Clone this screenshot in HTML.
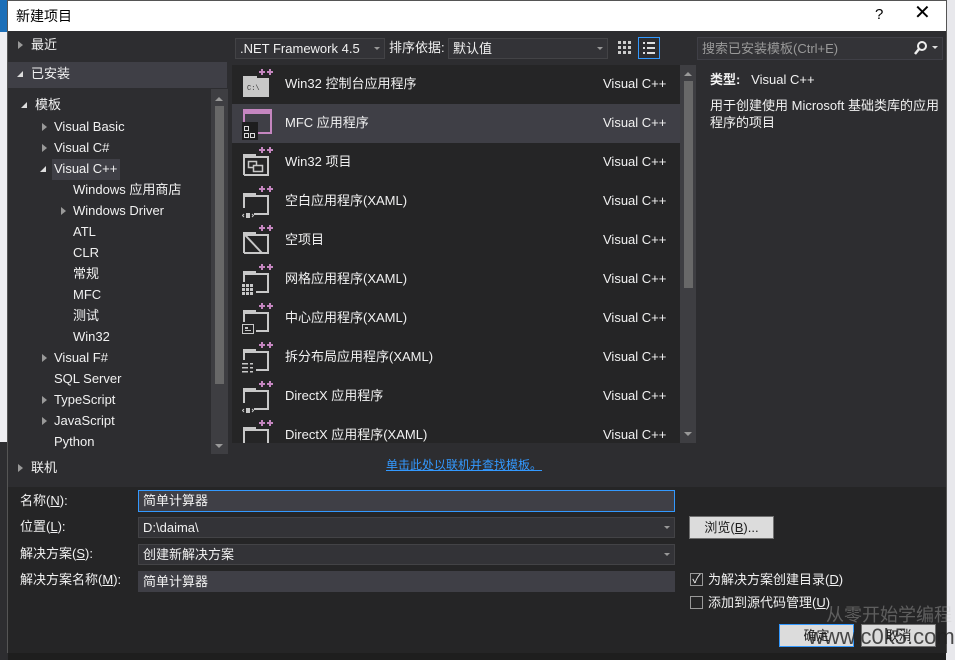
<!DOCTYPE html>
<html><head><meta charset="utf-8"><style>
*{margin:0;padding:0;box-sizing:border-box}
body{width:955px;height:660px;overflow:hidden;background:#2d2d30;font-family:"Liberation Sans","Noto Sans CJK SC",sans-serif;font-size:13px;line-height:16px;color:#f1f1f1;position:relative}
.a{position:absolute;white-space:nowrap}
.tri{position:absolute;width:0;height:0}
.tr{border-left:5px solid #999;border-top:4px solid transparent;border-bottom:4px solid transparent}
.td{border-right:6px solid #ddd;border-top:6px solid transparent}
.row{position:absolute;left:232px;width:448px;height:39px}
.row .n{position:absolute;left:53px;top:11px}
.row .v{position:absolute;left:371px;top:11px}
.ic{position:absolute;left:10px;top:4px}
.inp{position:absolute;background:#3f3f46;border:1px solid #3f3f46;height:21px;padding:2px 4px;color:#f1f1f1}
.btn{position:absolute;background:#dcdcdc;border:1px solid #707070;color:#1e1e1e;text-align:center;height:23px;line-height:21px}
.dd{position:absolute;right:4px;top:8px;border-left:3px solid transparent;border-right:3px solid transparent;border-top:3px solid #999}
</style></head><body>
<svg width="0" height="0" style="position:absolute"><defs>
<g id="pp"><path d="M17 3h6M20 0v6M25 3h6M28 0v6" stroke="#c586c0" stroke-width="2"/></g>
</defs></svg>
<div class="a" style="left:0;top:0;width:8px;height:32px;background:#1c6fb8"></div>
<div class="a" style="left:0;top:32px;width:8px;height:410px;background:#eeeef2"></div>
<div class="a" style="left:0;top:442px;width:8px;height:218px;background:#2d2d30"></div>
<div class="a" style="left:946px;top:0;width:9px;height:660px;background:#e8e8ec"></div>
<div class="a" style="left:7px;top:0;width:940px;height:653px;background:#2d2d30;border:1px solid #555"></div>
<div class="a" style="left:8px;top:1px;width:938px;height:30px;background:#fff;color:#000;font-size:14px;padding:7px 8px">新建项目</div>
<div class="a" style="left:875px;top:7px;color:#000;font-size:15px">?</div>
<div class="a" style="left:914px;top:5px;color:#000;font-size:20px;font-weight:300">✕</div>
<div class="a" style="left:8px;top:653px;width:938px;height:7px;background:#1e1e1e"></div>

<div class="tri tr" style="left:18px;top:41px"></div><div class="a" style="left:31px;top:37px">最近</div>
<div class="a" style="left:8px;top:62px;width:219px;height:26px;background:#3f3f46"></div>
<div class="tri td" style="left:17px;top:71px"></div><div class="a" style="left:31px;top:66px">已安装</div>
<div class="tri td" style="left:21px;top:102px"></div><div class="a" style="left:35px;top:97px">模板</div>
<div class="tri tr" style="left:42px;top:123px"></div><div class="a" style="left:54px;top:119px">Visual Basic</div>
<div class="tri tr" style="left:42px;top:144px"></div><div class="a" style="left:54px;top:140px">Visual C#</div>
<div class="a" style="left:52px;top:159px;width:68px;height:21px;background:#3f3f46"></div>
<div class="tri td" style="left:40px;top:166px"></div><div class="a" style="left:54px;top:161px">Visual C++</div>
<div class="a" style="left:73px;top:182px">Windows 应用商店</div>
<div class="tri tr" style="left:61px;top:207px"></div><div class="a" style="left:73px;top:203px">Windows Driver</div>
<div class="a" style="left:73px;top:224px">ATL</div>
<div class="a" style="left:73px;top:245px">CLR</div>
<div class="a" style="left:73px;top:266px">常规</div>
<div class="a" style="left:73px;top:287px">MFC</div>
<div class="a" style="left:73px;top:308px">测试</div>
<div class="a" style="left:73px;top:329px">Win32</div>
<div class="tri tr" style="left:42px;top:354px"></div><div class="a" style="left:54px;top:350px">Visual F#</div>
<div class="a" style="left:54px;top:371px">SQL Server</div>
<div class="tri tr" style="left:42px;top:396px"></div><div class="a" style="left:54px;top:392px">TypeScript</div>
<div class="tri tr" style="left:42px;top:417px"></div><div class="a" style="left:54px;top:413px">JavaScript</div>
<div class="a" style="left:54px;top:434px">Python</div>
<div class="tri tr" style="left:18px;top:464px"></div><div class="a" style="left:31px;top:460px">联机</div>
<div class="a" style="left:211px;top:89px;width:17px;height:365px;background:#3e3e42"></div>
<div class="a" style="left:215px;top:106px;width:9px;height:278px;background:#686868"></div>
<div class="a" style="left:215px;top:97px;border-left:4px solid transparent;border-right:4px solid transparent;border-bottom:4px solid #999"></div>
<div class="a" style="left:215px;top:444px;border-left:4px solid transparent;border-right:4px solid transparent;border-top:4px solid #999"></div>

<div class="a" style="left:235px;top:38px;width:150px;height:21px;border:1px solid #434346;background:#333337;padding:2px 4px">.NET Framework 4.5<div class="dd"></div></div>
<div class="a" style="left:389px;top:40px">排序依据:</div>
<div class="a" style="left:448px;top:38px;width:160px;height:21px;border:1px solid #434346;background:#333337;padding:2px 4px">默认值<div class="dd"></div></div>
<svg class="a" style="left:616px;top:39px" width="18" height="18"><g fill="#ccc"><rect x="2" y="2" width="3" height="3"/><rect x="7" y="2" width="3" height="3"/><rect x="12" y="2" width="3" height="3"/><rect x="2" y="7" width="3" height="3"/><rect x="7" y="7" width="3" height="3"/><rect x="12" y="7" width="3" height="3"/><rect x="2" y="12" width="3" height="3"/><rect x="7" y="12" width="3" height="3"/><rect x="12" y="12" width="3" height="3"/></g></svg>
<div class="a" style="left:638px;top:37px;width:22px;height:22px;border:1px solid #3399ff"></div>
<svg class="a" style="left:641px;top:40px" width="16" height="16"><g fill="#ddd"><rect x="2" y="2" width="2" height="2"/><rect x="6" y="2" width="8" height="2"/><rect x="2" y="7" width="2" height="2"/><rect x="6" y="7" width="8" height="2"/><rect x="2" y="12" width="2" height="2"/><rect x="6" y="12" width="8" height="2"/></g></svg>
<div class="a" style="left:697px;top:37px;width:246px;height:23px;background:#333337;border:1px solid #3f3f46;color:#999;padding:3px 4px">搜索已安装模板(Ctrl+E)</div>
<svg class="a" style="left:913px;top:40px" width="30" height="16"><circle cx="9" cy="6" r="4" fill="none" stroke="#eee" stroke-width="2"/><line x1="6" y1="9" x2="2" y2="14" stroke="#eee" stroke-width="2.5"/><path d="M19 6h6l-3 3z" fill="#ddd"/></svg>

<div class="a" style="left:232px;top:65px;width:464px;height:378px;background:#252526"></div>
<div class="a" style="left:680px;top:65px;width:16px;height:378px;background:#3e3e42"></div>
<div class="a" style="left:684px;top:81px;width:9px;height:207px;background:#686868"></div>
<div class="a" style="left:684px;top:72px;border-left:4px solid transparent;border-right:4px solid transparent;border-bottom:4px solid #999"></div>
<div class="a" style="left:684px;top:432px;border-left:4px solid transparent;border-right:4px solid transparent;border-top:4px solid #999"></div>

<div class="row" style="top:65px"><svg class="ic" width="32" height="32"><path d="M1 7h14v2h12v19H1z" fill="#c8c8c8"/><text x="5" y="21" font-size="7" fill="#333" font-family="Liberation Mono">C:\</text><use href="#pp"/></svg><span class="n">Win32 控制台应用程序</span><span class="v">Visual C++</span></div>
<div class="row" style="top:104px;background:#3f3f46"><svg class="ic" width="32" height="32"><rect x="2" y="2" width="27" height="23" fill="none" stroke="#c586c0" stroke-width="2"/><rect x="2" y="2" width="27" height="4" fill="#c586c0"/><rect x="0" y="14" width="16" height="18" fill="#1e1e1e"/><g fill="none" stroke="#ddd"><rect x="2.5" y="18.5" width="4" height="4"/><rect x="2.5" y="25.5" width="4" height="4"/><rect x="8.5" y="25.5" width="4" height="4"/></g></svg><span class="n">MFC 应用程序</span><span class="v">Visual C++</span></div>
<div class="row" style="top:143px"><svg class="ic" width="32" height="32"><path d="M2 28V8h12M2 10h24V28H2" fill="none" stroke="#c8c8c8" stroke-width="2"/><rect x="6.5" y="14.5" width="8" height="6" fill="none" stroke="#c8c8c8" stroke-width="1.5"/><rect x="11.5" y="18.5" width="9" height="6" fill="#252526" stroke="#c8c8c8" stroke-width="1.5"/><use href="#pp"/></svg><span class="n">Win32 项目</span><span class="v">Visual C++</span></div>
<div class="row" style="top:182px"><svg class="ic" width="32" height="32"><path d="M2 22V8h12M2 10h24v18H12" fill="none" stroke="#c8c8c8" stroke-width="2"/><path d="M2 28l-1.5 1.5L2 31M10 28l1.5 1.5L10 31" stroke="#c8c8c8" fill="none"/><rect x="4" y="27" width="4" height="5" fill="#c8c8c8"/><use href="#pp"/></svg><span class="n">空白应用程序(XAML)</span><span class="v">Visual C++</span></div>
<div class="row" style="top:221px"><svg class="ic" width="32" height="32"><path d="M2 28V8h12M2 10h24v18H2M3 10l17 18" fill="none" stroke="#c8c8c8" stroke-width="2"/><use href="#pp"/></svg><span class="n">空项目</span><span class="v">Visual C++</span></div>
<div class="row" style="top:260px"><svg class="ic" width="32" height="32"><path d="M2 18V8h12M2 10h24v18H14" fill="none" stroke="#c8c8c8" stroke-width="2"/><g fill="#c8c8c8"><rect x="0" y="20" width="3" height="3"/><rect x="4" y="20" width="3" height="3"/><rect x="8" y="20" width="3" height="3"/><rect x="0" y="24" width="3" height="3"/><rect x="4" y="24" width="3" height="3"/><rect x="8" y="24" width="3" height="3"/><rect x="0" y="28" width="3" height="3"/><rect x="4" y="28" width="3" height="3"/><rect x="8" y="28" width="3" height="3"/></g><use href="#pp"/></svg><span class="n">网格应用程序(XAML)</span><span class="v">Visual C++</span></div>
<div class="row" style="top:299px"><svg class="ic" width="32" height="32"><path d="M2 19V8h12M2 10h24v18H14" fill="none" stroke="#c8c8c8" stroke-width="2"/><rect x="0.5" y="21.5" width="11" height="9" fill="none" stroke="#c8c8c8"/><rect x="3" y="24" width="3" height="2" fill="#c8c8c8"/><rect x="3" y="27" width="6" height="1" fill="#c8c8c8"/><use href="#pp"/></svg><span class="n">中心应用程序(XAML)</span><span class="v">Visual C++</span></div>
<div class="row" style="top:338px"><svg class="ic" width="32" height="32"><path d="M2 18V8h12M2 10h24v18H14" fill="none" stroke="#c8c8c8" stroke-width="2"/><g fill="#c8c8c8"><rect x="0" y="21" width="6" height="1.5"/><rect x="8" y="21" width="3" height="1.5"/><rect x="0" y="25" width="6" height="1.5"/><rect x="8" y="25" width="3" height="1.5"/><rect x="0" y="29" width="6" height="1.5"/><rect x="8" y="29" width="3" height="1.5"/></g><use href="#pp"/></svg><span class="n">拆分布局应用程序(XAML)</span><span class="v">Visual C++</span></div>
<div class="row" style="top:377px"><svg class="ic" width="32" height="32"><path d="M2 22V8h12M2 10h24v18H12" fill="none" stroke="#c8c8c8" stroke-width="2"/><path d="M2 28l-1.5 1.5L2 31M10 28l1.5 1.5L10 31" stroke="#c8c8c8" fill="none"/><rect x="4" y="27" width="4" height="5" fill="#c8c8c8"/><use href="#pp"/></svg><span class="n">DirectX 应用程序</span><span class="v">Visual C++</span></div>
<div class="row" style="top:416px;height:27px;overflow:hidden"><svg class="ic" width="32" height="32"><path d="M2 28V8h12M2 10h24v18" fill="none" stroke="#c8c8c8" stroke-width="2"/><use href="#pp"/></svg><span class="n">DirectX 应用程序(XAML)</span><span class="v">Visual C++</span></div>

<div class="a" style="left:710px;top:72px"><b>类型:</b>&nbsp;&nbsp; Visual C++</div>
<div class="a" style="left:710px;top:97px;line-height:17px">用于创建使用 Microsoft 基础类库的应用<br>程序的项目</div>

<div class="a" style="left:386px;top:457px;color:#3399ff;text-decoration:underline;font-size:12px">单击此处以联机并查找模板。</div>

<div class="a" style="left:8px;top:487px;width:938px;height:166px;background:#252526"></div>
<div class="a" style="left:20px;top:493px">名称(<u>N</u>):</div>
<div class="inp" style="left:138px;top:490px;width:537px;height:22px;border-color:#3399ff;background:#3f3f46">简单计算器</div>
<div class="a" style="left:20px;top:519px">位置(<u>L</u>):</div>
<div class="inp" style="left:138px;top:517px;width:537px;background:#333337;border-color:#434346">D:\daima\<div class="dd"></div></div>
<div class="btn" style="left:689px;top:516px;width:85px">浏览(<u>B</u>)...</div>
<div class="a" style="left:20px;top:546px">解决方案(<u>S</u>):</div>
<div class="inp" style="left:138px;top:544px;width:537px;background:#333337;border-color:#434346">创建新解决方案<div class="dd"></div></div>
<div class="a" style="left:20px;top:572px">解决方案名称(<u>M</u>):</div>
<div class="inp" style="left:138px;top:571px;width:537px;height:21px">简单计算器</div>
<div class="a" style="left:690px;top:573px;width:13px;height:13px;border:1px solid #999;color:#eee;font-size:12px;line-height:11px;text-align:center">✓</div>
<div class="a" style="left:708px;top:572px">为解决方案创建目录(<u>D</u>)</div>
<div class="a" style="left:690px;top:596px;width:13px;height:13px;border:1px solid #999"></div>
<div class="a" style="left:708px;top:595px">添加到源代码管理(<u>U</u>)</div>
<div class="btn" style="left:779px;top:624px;width:75px;border-color:#3399ff">确定</div>
<div class="btn" style="left:861px;top:624px;width:75px">取消</div>
<div class="a" style="left:826px;top:605px;color:rgba(200,200,200,0.35);font-size:18px;line-height:20px">从零开始学编程</div>
<div class="a" style="left:808px;top:624px;color:#222;font-size:22px;line-height:26px;opacity:.8">www.c0k5.com</div>
</body></html>
